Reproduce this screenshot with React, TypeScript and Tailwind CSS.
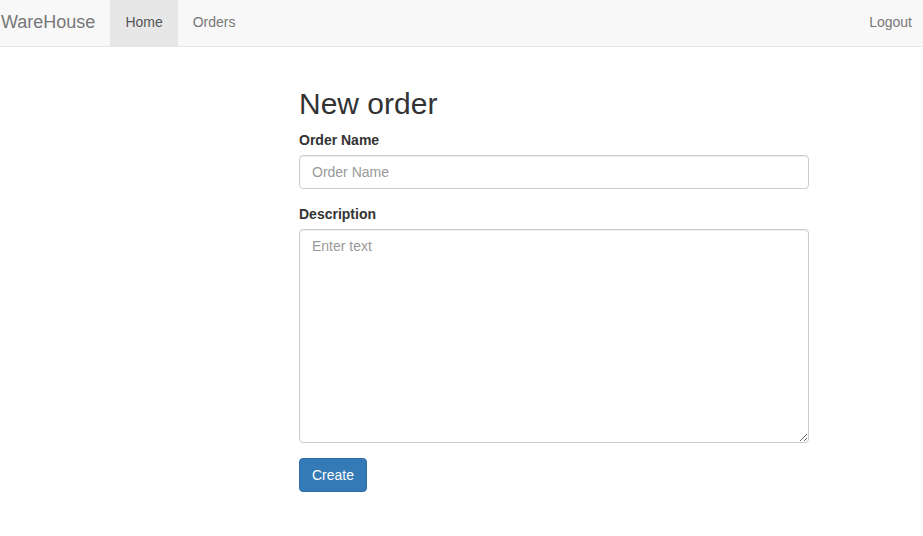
import React from "react";

export default function App() {
  return (
    <div className="min-h-[536px] bg-white text-[14px] leading-[20px] text-[#333]" style={{ fontFamily: '"Liberation Sans", Arial, sans-serif' }}>
      <nav className="flex h-[47px] items-stretch border-b border-[#e7e7e7] bg-[#f8f8f8]">
        <a className="flex items-center pb-[3px] pl-[1px] pr-[15px] text-[18px] leading-[20px] text-[#777]">WareHouse</a>
        <a className="flex items-center bg-[#e7e7e7] px-[15px] pb-[3px] text-[#555]">Home</a>
        <a className="flex items-center px-[15px] pb-[3px] text-[#777]">Orders</a>
        <div className="flex-1" />
        <a className="flex items-center pb-[3px] pl-[15px] pr-[11px] text-[#777]">Logout</a>
      </nav>
      <div className="ml-[299px] w-[510px] pt-[40px]">
        <h2 className="mb-[10px] text-[30px] font-medium leading-[33px] text-[#333]">New order</h2>
        <div className="mb-[15px]">
          <label className="mb-[5px] block font-bold">Order Name</label>
          <input
            placeholder="Order Name"
            className="block h-[34px] w-full rounded-[4px] border border-[#ccc] px-[12px] py-[6px] text-[14px] text-[#555] shadow-[inset_0_1px_1px_rgba(0,0,0,0.075)] outline-none placeholder:text-[#999]"
          />
        </div>
        <div className="mb-[15px]">
          <label className="mb-[5px] block font-bold">Description</label>
          <textarea
            rows={10}
            placeholder="Enter text"
            className="block h-[214px] w-full rounded-[4px] border border-[#ccc] px-[12px] py-[6px] text-[14px] leading-[20px] text-[#555] shadow-[inset_0_1px_1px_rgba(0,0,0,0.075)] outline-none placeholder:text-[#999]"
          />
        </div>
        <button className="h-[34px] rounded-[4px] border border-[#2e6da4] bg-[#337ab7] px-[12px] text-[14px] text-white">Create</button>
      </div>
    </div>
  );
}
